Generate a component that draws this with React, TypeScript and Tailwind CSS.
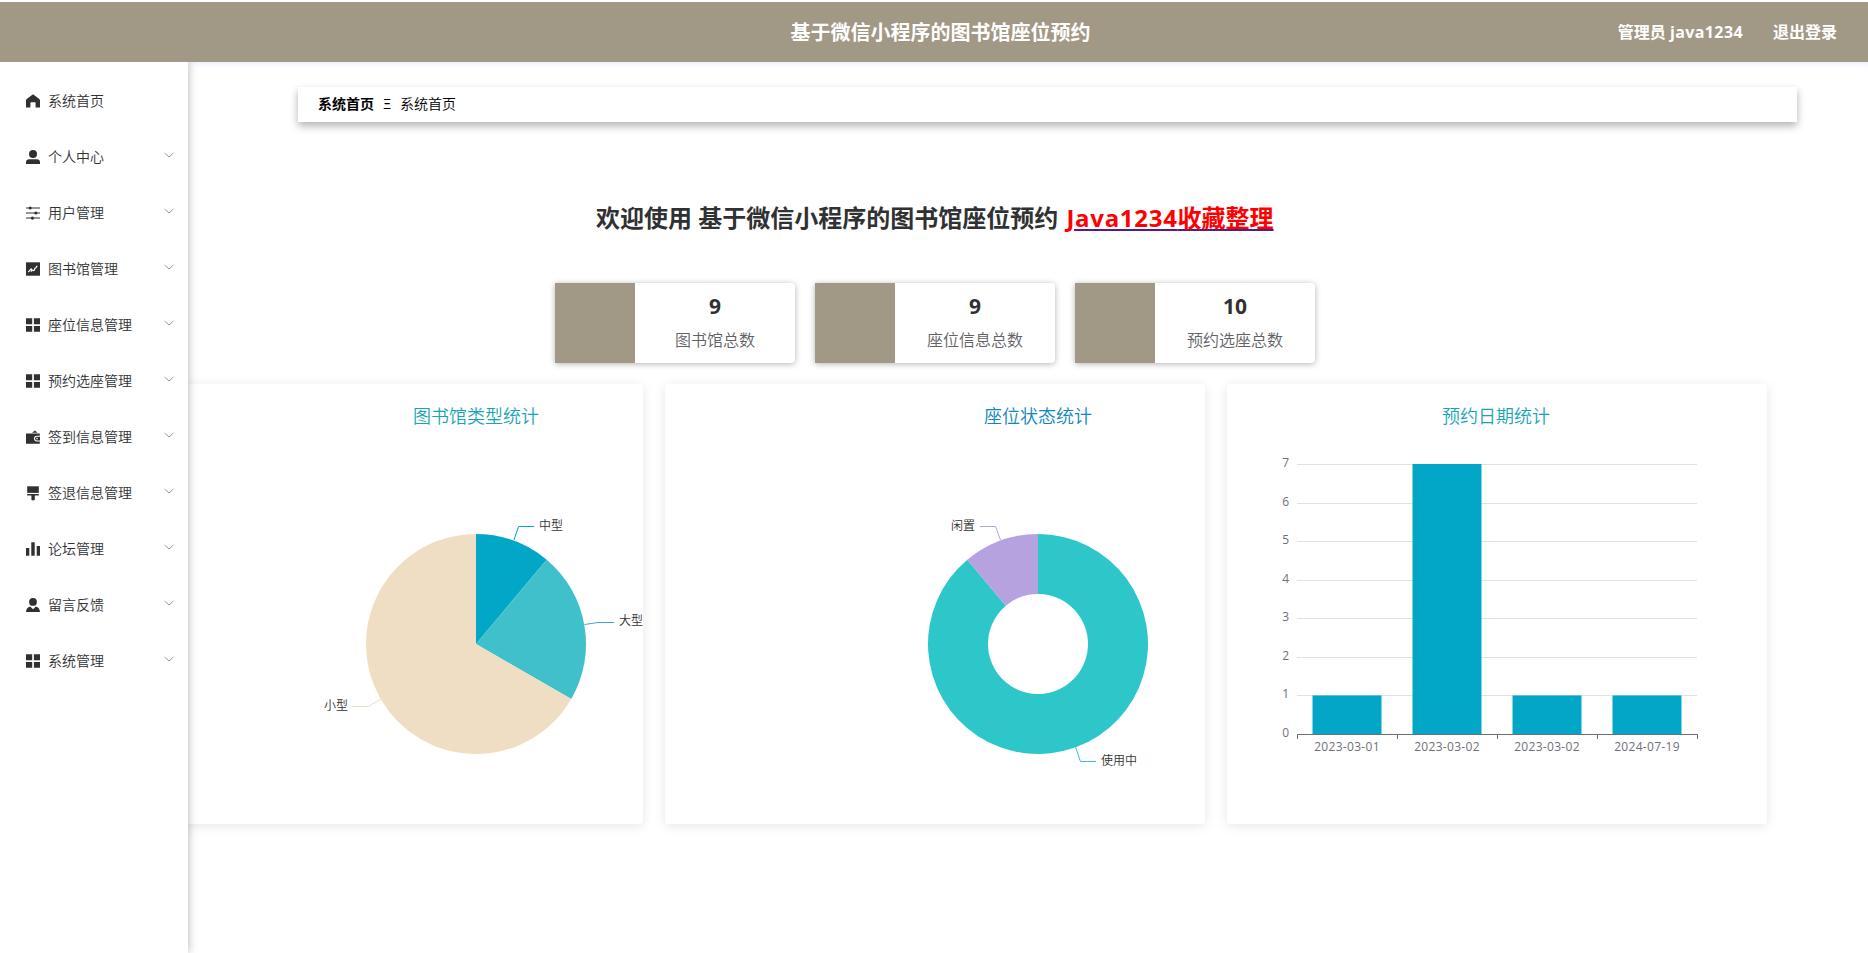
import type { ReactNode } from "react";

type TMenu = {
  title: string;
  icon: ReactNode;
  leaf?: boolean;
};

type TPoint = [number, number];

type TSlice = {
  name: string;
  value: number;
  color: string;
  line: string;
  points: string;
  label: TPoint;
  anchor: "start" | "end";
};

const gridIcon = (
  <path d="M0 .3h6.2v5.9H0zM7.9 .3H14v5.9H7.9zM0 8h6.2v5.7H0zM7.9 8H14v5.7H7.9z" />
);

const menus: TMenu[] = [
  {
    title: "系统首页",
    leaf: true,
    icon: <path d="M7 .3 13.3 5Q14 5.6 14 6.5V13.5H9.6V9Q9.6 8.2 8.8 8.2H5.2Q4.4 8.2 4.4 9V13.5H0V6.5Q0 5.6.7 5Z" />,
  },
  {
    title: "个人中心",
    icon: (
      <>
        <circle cx="7" cy="4" r="4" />
        <path d="M0 14v-1.5A3.3 3.3 0 0 1 3.3 9.2h7.4A3.3 3.3 0 0 1 14 12.5V14z" />
      </>
    ),
  },
  {
    title: "用户管理",
    icon: (
      <>
        <path d="M0 1.6h14v1H0zM0 6.6h14v1H0zM0 11.6h14v1H0z" />
        <circle cx="4.2" cy="2.1" r="1.5" />
        <circle cx="9.9" cy="7.1" r="1.5" />
        <circle cx="6.4" cy="12.1" r="1.6" />
      </>
    ),
  },
  {
    title: "图书馆管理",
    icon: (
      <>
        <path d="M0 .3h14v13.4H0z" />
        <path
          d="m2.3 10.2 2.8-3.4 2.1 2 3.8-4.4M5 9.9l1.2-2.8M7.9 8.9l1.3-3.1M10 4.2h1.4"
          fill="none"
          stroke="#fff"
          strokeWidth="1.1"
        />
      </>
    ),
  },
  { title: "座位信息管理", icon: gridIcon },
  { title: "预约选座管理", icon: gridIcon },
  {
    title: "签到信息管理",
    icon: (
      <>
        <path d="M6 2.7 9 .4l2.5 2.3z" />
        <path d="M0 3.4h13.8v2.4h-3a2.7 2.7 0 0 0 0 5.6h3v2.4H0z" />
        <path d="M10.8 6.8H14v3.6h-3.2a1.8 1.8 0 0 1 0-3.6z" />
        <circle cx="11" cy="8.6" r=".8" fill="#fff" />
      </>
    ),
  },
  {
    title: "签退信息管理",
    icon: (
      <>
        <path d="M1.2.3h11.6v6.6H1.2z" />
        <path d="M1.2 7.9h11.6v1.6H8.8v4.2Q7 15.1 5.4 13.7V9.5H1.2z" />
      </>
    ),
  },
  {
    title: "论坛管理",
    icon: <path d="M0 6h3.3v7.8H0zM5.3.3h3.4v13.5H5.3zM10.7 4H14v9.8h-3.3z" />,
  },
  {
    title: "留言反馈",
    icon: (
      <>
        <circle cx="7" cy="3.9" r="3.9" />
        <path d="M0 14c.2-3.2 1.6-4.9 4.2-5.6L7 11.2l2.8-2.8c2.6.7 4 2.4 4.2 5.6z" />
      </>
    ),
  },
  { title: "系统管理", icon: gridIcon },
];

const stats = [
  { count: 9, title: "图书馆总数" },
  { count: 9, title: "座位信息总数" },
  { count: 10, title: "预约选座总数" },
];

const libraryTypes: TSlice[] = [
  { name: "中型", value: 1, color: "#02a7c7", line: "#02a7c7", points: "411,156 415.5,142.5 431,142.5", label: [436, 145.5], anchor: "start" },
  { name: "大型", value: 2, color: "#3fc0ca", line: "#3aa9c9", points: "481.5,240.5 495,238.5 511,238.5", label: [516, 240.5], anchor: "start" },
  { name: "小型", value: 6, color: "#efdec3", line: "#ecdcc8", points: "278,315 265.5,322.5 249,322.5", label: [245, 325.5], anchor: "end" },
];

const seatStatus: TSlice[] = [
  { name: "使用中", value: 8, color: "#2ec7c9", line: "#2ec7c9", points: "410.5,363 415.5,377.5 431,377.5", label: [436, 380.5], anchor: "start" },
  { name: "闲置", value: 1, color: "#b6a2de", line: "#b6a2de", points: "335.5,156 330.5,142.5 315,142.5", label: [310, 145.5], anchor: "end" },
];

const reserveDates = [
  { date: "2023-03-01", value: 1 },
  { date: "2023-03-02", value: 7 },
  { date: "2023-03-02", value: 1 },
  { date: "2024-07-19", value: 1 },
];

const CX = 373;
const CY = 260;

function point(radius: number, ratio: number): TPoint {
  const angle = ratio * Math.PI * 2;
  return [CX + radius * Math.sin(angle), CY - radius * Math.cos(angle)];
}

function slicePath(start: number, end: number, inner: number) {
  const large = end - start > 0.5 ? 1 : 0;
  const a = point(110, start).join(" ");
  const b = point(110, end).join(" ");
  const c = point(inner, end).join(" ");
  const d = point(inner, start).join(" ");
  return `M${a}A110 110 0 ${large} 1 ${b}L${c}A${inner} ${inner} 0 ${large} 0 ${d}Z`;
}

function PieChart({ data, inner = 0 }: { data: TSlice[]; inner?: number }) {
  const total = data.reduce((sum, item) => sum + item.value, 0);
  let current = 0;
  return (
    <svg width="540" height="440" className="block">
      {data.map((item) => {
        const start = current / total;
        current += item.value;
        return (
          <g key={item.name}>
            <path d={slicePath(start, current / total, inner)} fill={item.color} />
            <polyline points={item.points} fill="none" stroke={item.line} />
            <text
              x={item.label[0]}
              y={item.label[1]}
              textAnchor={item.anchor}
              fontSize="12"
              fill="#333"
              className="font-[350]"
            >
              {item.name}
            </text>
          </g>
        );
      })}
    </svg>
  );
}

function BarChart() {
  return (
    <svg width="540" height="440" className="block">
      {[0, 1, 2, 3, 4, 5, 6, 7].map((n) => {
        const y = Math.round(350 - (n * 270) / 7) + 0.5;
        return (
          <g key={n}>
            {n > 0 && <path d={`M70 ${y}H470`} stroke="#e0e3e6" />}
            <text x="62" y={y + 2.5} textAnchor="end" fontSize="12" fill="#6e7079">
              {n}
            </text>
          </g>
        );
      })}
      {reserveDates.map((item, i) => {
        const height = (item.value * 270) / 7;
        return (
          <g key={i}>
            <rect x={85.5 + i * 100} y={350 - height} width="69" height={height} fill="#02a7c7" />
            <text
              x={120 + i * 100}
              y="367"
              textAnchor="middle"
              fontSize="12"
              fill="#6e7079"
              className="tracking-[0.3px]"
            >
              {item.date}
            </text>
          </g>
        );
      })}
      <path
        d="M70 350.5H471M70.5 350v5M170.5 350v5M270.5 350v5M370.5 350v5M470.5 350v5"
        stroke="#6e7079"
      />
    </svg>
  );
}

function ChartCard({ title, titleClass, children }: { title: string; titleClass: string; children: ReactNode }) {
  return (
    <div className="relative h-[440px] w-[540px] shrink-0 rounded bg-white shadow-[0_2px_12px_rgba(0,0,0,0.1)]">
      <h3 className={`absolute top-[19px] w-full text-center text-[18px] leading-[27px] font-[350] ${titleClass}`}>
        {title}
      </h3>
      {children}
    </div>
  );
}

function Header() {
  return (
    <header className="relative z-20 mt-[2px] flex h-[60px] shrink-0 items-center bg-[#a29886] font-bold text-white">
      <div className="flex-1" />
      <h1 className="mt-[2px] ml-[44px] text-[20px] leading-[30px]">基于微信小程序的图书馆座位预约</h1>
      <div className="flex flex-1 justify-end gap-[30px] pr-[31px] text-[16px]">
        <span>
          管理员 <span className="tracking-[0.4px]">java1234</span>
        </span>
        <span>退出登录</span>
      </div>
    </header>
  );
}

function Sidebar() {
  return (
    <aside className="relative z-10 w-[188px] shrink-0 bg-white pt-[11px] shadow-[1px_0_8px_rgba(0,0,0,0.25)]">
      <ul>
        {menus.map((item) => (
          <li key={item.title} className="flex h-14 items-center pr-[13px] pl-[26px] text-[14px] text-[#303133]">
            <svg width="14" height="14" viewBox="0 0 14 14" fill="#2e3033" className="mr-2 shrink-0 overflow-visible">
              {item.icon}
            </svg>
            <span className="-mt-[2px] flex-1 font-[350]">{item.title}</span>
            {!item.leaf && (
              <svg width="12" height="12" viewBox="0 0 12 12" className="-mt-[5px]">
                <path d="m1.6 4 4.4 4 4.4-4" fill="none" stroke="#8b8d91" strokeWidth=".9" />
              </svg>
            )}
          </li>
        ))}
      </ul>
    </aside>
  );
}

export default function App() {
  return (
    <div className="flex h-[953px] w-[1868px] flex-col overflow-hidden bg-white font-['Open_Sans','Noto_Sans_CJK_SC',sans-serif]">
      <Header />
      <div className="flex min-h-0 flex-1 shadow-[inset_0_8px_8px_-8px_#dfe6f8]">
        <Sidebar />
        <main className="min-w-0 flex-1 pt-[25px]">
          <div className="mr-[71px] ml-[110px] flex h-[35px] items-center bg-white pb-[2px] pl-5 text-[14px] text-black shadow-[0_4px_8px_rgba(0,0,0,0.3)]">
            <b>系统首页</b>
            <span className="mx-[9px] w-2 text-center">Ξ</span>
            <span className="font-[350]">系统首页</span>
          </div>

          <h2 className="mt-[78px] ml-[408px] text-[24px] leading-9 font-bold whitespace-nowrap text-[#303133]">
            欢迎使用 基于微信小程序的图书馆座位预约{" "}
            <a className="ml-[2px] text-[#f00] underline decoration-[#551a8b] decoration-2 underline-offset-2">
              <span className="tracking-[0.7px]">Java1234</span>收藏整理
            </a>
          </h2>

          <div className="mt-[47px] ml-[367px] flex gap-5">
            {stats.map((item) => (
              <div
                key={item.title}
                className="flex h-20 w-60 rounded-r bg-white shadow-[0_1px_6px_rgba(0,0,0,0.3)]"
              >
                <div className="w-20 bg-[#a29886]" />
                <div className="flex flex-1 flex-col items-center pt-2">
                  <span className="text-[21px] leading-[30px] font-bold text-[#303133]">{item.count}</span>
                  <span className="mt-[7px] text-[16px] leading-6 font-[350] text-[#606266]">{item.title}</span>
                </div>
              </div>
            ))}
          </div>

          <div className="mt-[21px] -ml-[85px] flex gap-[22px]">
            <ChartCard title="图书馆类型统计" titleClass="pl-[206px] text-[#17a5b5]">
              <PieChart data={libraryTypes} />
            </ChartCard>
            <ChartCard title="座位状态统计" titleClass="pl-[206px] text-[#0e86c0]">
              <PieChart data={seatStatus} inner={50} />
            </ChartCard>
            <ChartCard title="预约日期统计" titleClass="pr-[2px] text-[#17a5b5]">
              <BarChart />
            </ChartCard>
          </div>
        </main>
      </div>
    </div>
  );
}
